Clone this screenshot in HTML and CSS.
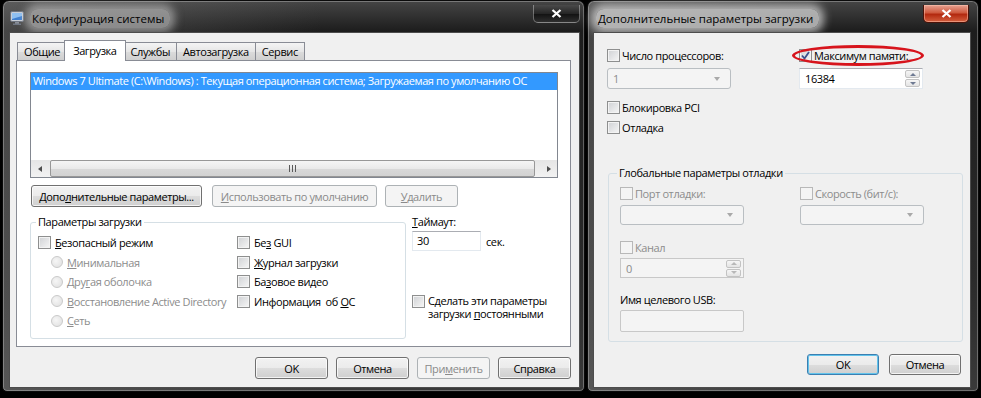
FILE: index.html
```html
<!DOCTYPE html>
<html>
<head>
  <title>Конфигурация системы</title>
  <link rel="stylesheet" href="styles.css">
</head>
<body>
  <div class="window win-msconfig">
    <div class="titlebar">
      <svg class="app-icon" width="14" height="14" viewBox="0 0 14 14">
        <rect x="0.5" y="0.5" width="13" height="10" rx="1.5" fill="#c9ced6" stroke="#6d7480"/>
        <rect x="2" y="2" width="10" height="7" fill="#3f7fd0"/>
        <path d="M2 2h10v3L2 8z" fill="#8fc0f2"/>
        <rect x="5" y="11" width="4" height="2" fill="#8a8f98"/>
        <rect x="3" y="12.5" width="8" height="1.5" fill="#6d7480"/>
      </svg>
      <span class="title">Конфигурация системы</span>
      <div class="close-btn">
        <svg width="11" height="9" viewBox="0 0 11 9"><path d="M1.5 1l8 7M9.5 1l-8 7" stroke="#fff" stroke-width="2.3"/></svg>
      </div>
    </div>
    <div class="client">
      <div class="tabs">
        <div class="tab">Общие</div>
        <div class="tab active">Загрузка</div>
        <div class="tab">Службы</div>
        <div class="tab">Автозагрузка</div>
        <div class="tab">Сервис</div>
      </div>
      <div class="tab-page">
        <div class="listbox">
          <div class="list-item selected">Windows 7 Ultimate (C:\Windows) : Текущая операционная система; Загружаемая по умолчанию ОС</div>
          <div class="hscroll">
            <div class="sb-arrow"><i class="tri-left"></i></div>
            <div class="sb-thumb"><span class="grip"></span></div>
            <div class="sb-arrow"><i class="tri-right"></i></div>
          </div>
        </div>
        <div class="btn-row">
          <button class="btn w-adv">Допо<u>л</u>нительные параметры...</button>
          <button class="btn w-default" disabled><u>И</u>спользовать по умолчанию</button>
          <button class="btn w-del" disabled><u>У</u>далить</button>
        </div>
        <div class="boot-area">
          <fieldset class="group boot-options">
            <legend>Параметры загрузки</legend>
            <div class="opt-cols">
              <div class="opt-col">
                <label class="check"><span class="box"></span><span><u>Б</u>езопасный режим</span></label>
                <label class="radio disabled"><span class="dot"></span><span><u>М</u>инимальная</span></label>
                <label class="radio disabled"><span class="dot"></span><span>Дру<u>г</u>ая оболочка</span></label>
                <label class="radio disabled"><span class="dot"></span><span><u>В</u>осстановление Active Directory</span></label>
                <label class="radio disabled"><span class="dot"></span><span><u>С</u>еть</span></label>
              </div>
              <div class="opt-col">
                <label class="check"><span class="box"></span><span>Бе<u>з</u> GUI</span></label>
                <label class="check"><span class="box"></span><span><u>Ж</u>урнал загрузки</span></label>
                <label class="check"><span class="box"></span><span>Ба<u>з</u>овое видео</span></label>
                <label class="check"><span class="box"></span><span>Информация&nbsp; об <u>О</u>С</span></label>
              </div>
            </div>
          </fieldset>
          <div class="timeout">
            <div class="field-label"><u>Т</u>аймаут:</div>
            <div class="timeout-row">
              <div class="edit w-timeout">30</div>
              <span>сек.</span>
            </div>
            <label class="check persist"><span class="box"></span><span>Сделать эти параметры загрузки <u>п</u>остоянными</span></label>
          </div>
        </div>
      </div>
      <div class="dlg-buttons">
        <button class="btn w-dlg">OK</button>
        <button class="btn w-dlg">Отмена</button>
        <button class="btn w-dlg" disabled>При<u>м</u>енить</button>
        <button class="btn w-dlg">Справка</button>
      </div>
    </div>
  </div>

  <div class="window win-advanced">
    <div class="titlebar">
      <span class="title">Дополнительные параметры загрузки</span>
      <div class="close-btn red">
        <svg width="11" height="9" viewBox="0 0 11 9"><path d="M1.5 1l8 7M9.5 1l-8 7" stroke="#fff" stroke-width="2.3"/></svg>
      </div>
    </div>
    <div class="client adv">
      <div class="adv-top">
        <div class="adv-col">
          <label class="check line16"><span class="box"></span><span>Число процессоров:</span></label>
          <div class="combo disabled w-field"><span>1</span><i class="tri-down"></i></div>
        </div>
        <div class="adv-col">
          <label class="check line16"><span class="box">
            <svg width="11" height="11" viewBox="0 0 11 11"><path d="M2 5.5l2.5 3L9 2" fill="none" stroke="#3d4f8c" stroke-width="1.8"/></svg>
          </span><span>Максимум памяти:</span></label>
          <div class="spin w-field">
            <span>16384</span>
            <div class="spin-btns"><i class="spin-up"></i><i class="spin-down"></i></div>
          </div>
        </div>
      </div>
      <label class="check row20 first"><span class="box"></span><span>Блокировка PCI</span></label>
      <label class="check row20"><span class="box"></span><span>Отладка</span></label>
      <fieldset class="group debug">
        <legend>Глобальные параметры отладки</legend>
        <div class="debug-grid">
          <div class="debug-col">
            <label class="check line16 disabled"><span class="box"></span><span>Порт отладки:</span></label>
            <div class="combo disabled w-field short"><span></span><i class="tri-down"></i></div>
          </div>
          <div class="debug-col">
            <label class="check line16 disabled"><span class="box"></span><span>Скорость (бит/с):</span></label>
            <div class="combo disabled w-field short"><span></span><i class="tri-down"></i></div>
          </div>
        </div>
        <label class="check line16 disabled channel"><span class="box"></span><span>Канал</span></label>
        <div class="spin disabled w-field short">
          <span>0</span>
          <div class="spin-btns"><i class="spin-up"></i><i class="spin-down"></i></div>
        </div>
        <div class="field-label usb">Имя целевого USB:</div>
        <div class="edit disabled w-field usb-edit"></div>
      </fieldset>
      <div class="dlg-buttons adv-buttons">
        <button class="btn w-dlg default">OK</button>
        <button class="btn w-dlg">Отмена</button>
      </div>
      <div class="mark"></div>
    </div>
  </div>
</body>
</html>
```

FILE: styles.css
```css
* {
  box-sizing: border-box;
}

body {
  margin: 0;
  width: 981px;
  height: 398px;
  overflow: hidden;
  background: #000;
  display: flex;
  align-items: flex-start;
  font-family: "Open Sans", sans-serif;
  font-size: 11px;
  letter-spacing: -0.4px;
  color: #000;
}

u {
  text-decoration: underline;
  text-underline-offset: 1px;
}

/* window frame */

.window {
  position: relative;
  height: 392px;
  display: flex;
  flex-direction: column;
  border: 1px solid #0a0a0a;
  border-radius: 7px 7px 5px 5px;
  background:
    linear-gradient(90deg, rgba(120, 120, 120, 0.45), rgba(0, 0, 0, 0) 55%),
    linear-gradient(#454545, #1d1d1d 30px, #2a2a2a 70%, #3a3a3a);
  box-shadow: inset 0 0 0 1px rgba(255, 255, 255, 0.28);
}

.win-msconfig {
  margin-left: 2px;
  width: 583px;
  padding: 0 4px 3px 6px;
}

.win-advanced {
  margin-left: 2px;
  width: 392px;
  padding: 0 7px 3px 5px;
}

.titlebar {
  height: 31px;
  display: flex;
  align-items: center;
}

.app-icon {
  margin: 2px 0 0 1px;
}

.title {
  margin-left: 6px;
  padding: 2px 6px 2px 2px;
  margin-top: 3px;
  font-size: 11.5px;
  letter-spacing: 0;
  color: #000;
  background: rgba(205, 205, 205, 0.55);
  border-radius: 8px;
  box-shadow: 0 0 9px 5px rgba(205, 205, 205, 0.55);
}

.win-advanced .title {
  margin-left: 3px;
  background: rgba(215, 215, 215, 0.75);
  box-shadow: 0 0 9px 5px rgba(215, 215, 215, 0.75);
}

.close-btn {
  align-self: flex-start;
  margin: 4px 0 0 auto;
  width: 47px;
  height: 18px;
  display: flex;
  align-items: center;
  justify-content: center;
  border: 1px solid rgba(255, 255, 255, 0.35);
  border-top: none;
  border-radius: 0 0 5px 5px;
  background: linear-gradient(#4a4a4a, #262626 50%, #111 51%, #2e2e2e);
}

.close-btn.red {
  margin-right: 2px;
  width: 46px;
  border: 1px solid #4a1208;
  border-top: none;
  background: linear-gradient(#e7a393, #cf5a3f 45%, #b3290f 55%, #d4603f);
  box-shadow: inset 0 0 0 1px rgba(255, 200, 180, 0.5);
}

.client {
  position: relative;
  flex: 1;
  background: #f0f0f0;
  border: 1px solid #4d4d4d;
  padding: 7px 8px 0 6px;
}

/* tabs */

.tabs {
  display: flex;
  align-items: flex-end;
  height: 21px;
  margin-bottom: -1px;
  padding-left: 1px;
}

.tab {
  position: relative;
  height: 18px;
  margin: 0 -1px 1px 0;
  padding: 0 6px;
  line-height: 17px;
  border: 1px solid #898c95;
  border-bottom: none;
  background: linear-gradient(#f4f4f4, #e6e6e6 50%, #dcdcdc 50%, #cfcfcf);
}

.tab.active {
  z-index: 2;
  height: 21px;
  margin: 0 -2px 0 -2px;
  padding: 0 8px;
  line-height: 19px;
  background: #fff;
}

.tab-page {
  height: 287px;
  padding: 11px 0 0 13px;
  border: 1px solid #898c95;
  background: #fff;
}

.listbox {
  width: 528px;
  height: 106px;
  display: flex;
  flex-direction: column;
  border: 1px solid #828790;
  overflow: hidden;
}

.list-item {
  height: 17px;
  line-height: 16px;
  padding-left: 2px;
  white-space: nowrap;
}

.list-item.selected {
  background: #3399ff;
  color: #fff;
}

.hscroll {
  margin-top: auto;
  height: 17px;
  display: flex;
  align-items: stretch;
  background: linear-gradient(#e5e5e5, #f2f2f2);
}

.sb-arrow {
  width: 17px;
  display: flex;
  align-items: center;
  justify-content: center;
}

.tri-left {
  border-top: 3.5px solid transparent;
  border-bottom: 3.5px solid transparent;
  border-right: 4px solid #4d4d4d;
}

.tri-right {
  border-top: 3.5px solid transparent;
  border-bottom: 3.5px solid transparent;
  border-left: 4px solid #4d4d4d;
}

.sb-thumb {
  flex: 1;
  margin: 0 5px 0 2px;
  display: flex;
  align-items: center;
  justify-content: center;
  border: 1px solid #979797;
  border-radius: 2px;
  background: linear-gradient(#f5f5f5, #e9e9e9 50%, #d9d9d9 51%, #d2d2d2);
}

.grip {
  width: 7px;
  height: 7px;
  background: repeating-linear-gradient(90deg, #5a5a5a 0 1px, transparent 1px 3px);
}

/* buttons */

.btn {
  height: 22px;
  padding: 0;
  font: inherit;
  letter-spacing: inherit;
  color: #000;
  border: 1px solid #707070;
  border-radius: 3px;
  background: linear-gradient(#f2f2f2, #ebebeb 50%, #dddddd 51%, #cfcfcf);
  box-shadow: inset 0 0 0 1px rgba(255, 255, 255, 0.75);
}

.btn:disabled {
  color: #8a8a8a;
  border-color: #adb2b5;
  background: #f4f4f4;
  box-shadow: none;
}

.btn.default {
  border-color: #3c7fb1;
  box-shadow: inset 0 0 0 1px #62c3eb;
}

.btn-row {
  display: flex;
  margin: 7px 0 0 1px;
}

.w-adv {
  width: 171px;
}

.w-default {
  width: 165px;
  margin-left: 10px;
}

.w-del {
  width: 73px;
  margin-left: 8px;
}

.w-dlg {
  width: 73px;
}

.dlg-buttons {
  display: flex;
  justify-content: flex-end;
  gap: 8px;
  margin-top: 10px;
}

/* group boxes */

.group {
  margin: 0;
  min-width: 0;
  border: 1px solid #d5dfe5;
  border-radius: 3px;
}

.group legend {
  padding: 0 2px;
  margin-left: -2px;
  line-height: 16px;
}

.boot-area {
  display: flex;
  margin-top: 7px;
}

.boot-options {
  width: 376px;
  height: 125px;
  padding: 3px 6px 0 7px;
}

.opt-cols {
  display: grid;
  grid-template-columns: 199px 1fr;
}

.check,
.radio {
  display: flex;
  align-items: center;
  height: 19.5px;
  white-space: nowrap;
}

.box {
  flex: none;
  width: 13px;
  height: 13px;
  margin-right: 3px;
  display: flex;
  align-items: center;
  justify-content: center;
  border: 1px solid #8e8f8f;
  background: linear-gradient(135deg, #cfd1d4, #f6f6f6);
  box-shadow: inset 0 0 0 1px #f3f3f3;
}

.opt-col .check .box {
  margin-right: 4px;
}

.radio {
  color: #8c8c8c;
  padding-left: 13px;
}

.dot {
  width: 12px;
  height: 12px;
  margin-right: 4px;
  border-radius: 50%;
  border: 1px solid #cacaca;
  background: radial-gradient(circle at 40% 40%, #f6f6f6, #dedede);
}

.disabled {
  color: #8c8c8c;
}

.check.disabled .box {
  border-color: #b8b8b8;
  background: #f4f4f4;
  box-shadow: none;
}

.timeout {
  margin-left: 6px;
  display: flex;
  flex-direction: column;
}

.field-label {
  line-height: 16px;
}

.timeout-row {
  display: flex;
  align-items: center;
  margin-top: 1px;
}

.timeout-row span {
  margin-left: 5px;
}

.edit {
  height: 20px;
  line-height: 18px;
  padding-left: 4px;
  background: #fff;
  border: 1px solid #e3e9ef;
  border-top-color: #abadb3;
}

.w-timeout {
  width: 69px;
}

.persist {
  margin-top: 43px;
  height: auto;
  align-items: flex-start;
  white-space: normal;
  width: 150px;
  line-height: 13px;
}

.persist .box {
  margin-top: 1px;
}

/* advanced dialog */

.client.adv {
  padding: 14px 9px 0 13px;
}

.adv-top {
  display: grid;
  grid-template-columns: 192px 1fr;
}

.check.line16 {
  height: 16px;
}

.check.line16 .box {
  margin-right: 2px;
}

.w-field {
  width: 124px;
}

.combo {
  height: 21px;
  margin-top: 5px;
  display: flex;
  align-items: center;
  padding: 0 10px 0 5px;
  border: 1px solid #b9bec2;
  border-radius: 3px;
  background: #f4f4f4;
}

.tri-down {
  margin-left: auto;
  border-left: 3.5px solid transparent;
  border-right: 3.5px solid transparent;
  border-top: 4px solid #a9a9a9;
}

.spin {
  height: 21px;
  margin-top: 5px;
  display: flex;
  align-items: center;
  padding: 0 2px 0 5px;
  background: #fff;
  border: 1px solid #e3e9ef;
  border-top-color: #abadb3;
}

.spin-btns {
  margin-left: auto;
  display: flex;
  flex-direction: column;
  gap: 1px;
}

.spin-btns i {
  width: 15px;
  height: 8px;
  display: flex;
  align-items: center;
  justify-content: center;
  border: 1px solid #c3c3c3;
  border-radius: 2px;
  background: linear-gradient(#f6f6f6, #e4e4e4);
}

.spin-up::after {
  content: "";
  border-left: 3px solid transparent;
  border-right: 3px solid transparent;
  border-bottom: 3px solid #6e7a93;
}

.spin-down::after {
  content: "";
  border-left: 3px solid transparent;
  border-right: 3px solid transparent;
  border-top: 3px solid #6e7a93;
}

.spin.disabled {
  background: #f4f4f4;
  border-color: #c8c8c8;
  color: #8c8c8c;
}

.spin.disabled .spin-btns i::after {
  border-top-color: #b8b8b8;
  border-bottom-color: #b8b8b8;
}

.combo.short,
.spin.short {
  height: 20px;
  margin-top: 4px;
}

.check.row20 {
  height: 20px;
}

.check.row20.first {
  margin-top: 8px;
}

.check.row20 .box {
  margin-right: 2px;
}

.debug {
  width: 355px;
  margin: 28px 0 0 1px;
  padding: 4px 0 9px 11px;
}

.debug legend {
  margin-left: -3px;
}

.debug-grid {
  display: grid;
  grid-template-columns: 180px 1fr;
}

.channel {
  margin-top: 14px;
}

.spin.short {
  margin-top: 3px;
}

.field-label.usb {
  margin-top: 14px;
}

.edit.usb-edit {
  height: 22px;
  margin-top: 2px;
  background: #f4f4f4;
  border: 1px solid #c8c8c8;
  border-radius: 2px;
}

.adv-buttons {
  margin-top: 12px;
  gap: 10px;
}

.adv-buttons .w-dlg {
  width: 72px;
  height: 21px;
}

/* red marker drawn over the memory option */
.mark {
  position: absolute;
  left: 198px;
  top: 12px;
  width: 132px;
  height: 21px;
  border: 3px solid #d7141c;
  border-radius: 50%;
}
```
